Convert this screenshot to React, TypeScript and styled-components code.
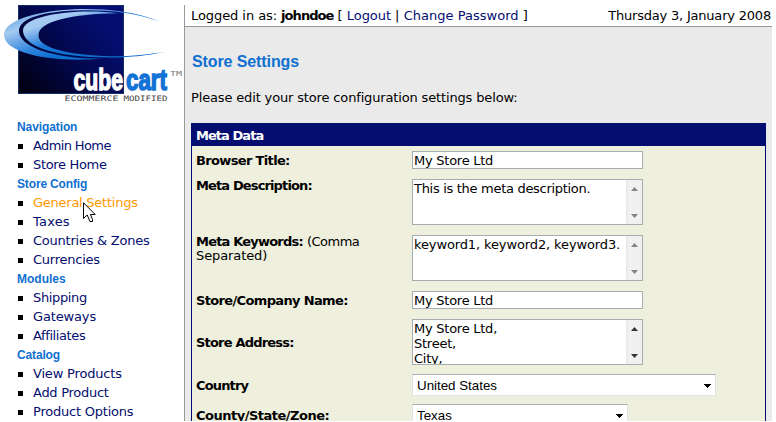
import React from "react";
import styled, { createGlobalStyle, css } from "styled-components";

const GlobalStyle = createGlobalStyle`
  * { box-sizing: border-box; }
  html, body { margin: 0; background: #fff; }
  body {
    height: 422px;
    overflow: hidden;
    font: 13px/15px Verdana, "DejaVu Sans", sans-serif;
    color: #000;
  }
`;

const navy = "#040e70";
const blue = "#0f70d0";

const Page = styled.div`
  display: flex;
  width: 772px;
  height: 421px;
  padding-top: 5px;
  overflow: hidden;
`;

const Sidebar = styled.aside`
  width: 184px;
  flex: none;
  white-space: nowrap;
`;

const Logo = styled.svg`
  display: block;
  margin-bottom: 8px;
`;

const NavHeading = styled.h2<{ $spacing?: number }>`
  margin: 0 0 0 17px;
  height: 19px;
  font: bold 12px/19px "Liberation Sans", Arial, sans-serif;
  letter-spacing: ${(p) => p.$spacing ?? 0}px;
  color: ${blue};
`;

const NavList = styled.ul`
  margin: 0;
  padding: 0 0 0 18px;
  list-style: none;
`;

const NavItem = styled.li`
  display: flex;
  align-items: center;
  gap: 10px;
  height: 19px;
  &::before {
    content: "";
    width: 5px;
    height: 5px;
    background: #000;
  }
`;

const NavLink = styled.a<{ $active?: boolean; $spacing?: number }>`
  position: relative;
  height: 19px;
  line-height: 17px;
  letter-spacing: ${(p) => p.$spacing ?? 0}px;
  color: ${(p) => (p.$active ? "#ff9900" : navy)};
`;

const Cursor = styled.svg`
  position: absolute;
  left: 50px;
  top: 8px;
`;

const Main = styled.main`
  flex: 1;
  min-width: 0;
  border-left: 1px solid #999;
  background: #eaeaea;
  white-space: nowrap;
`;

const TopBar = styled.header`
  display: flex;
  justify-content: space-between;
  height: 22px;
  padding: 0 1px 0 6px;
  border-bottom: 1px solid #999;
  background: #fff;
  line-height: 21px;
`;

const Run = styled.span<{ $spacing?: number; $bold?: boolean; $link?: boolean }>`
  letter-spacing: ${(p) => p.$spacing ?? 0}px;
  font-weight: ${(p) => (p.$bold ? "bold" : "normal")};
  ${(p) => p.$link && css`color: ${navy};`}
`;

const Content = styled.div`
  padding: 24px 6px 0;
`;

const Title = styled.h1`
  margin: 0 0 0 1px;
  height: 20px;
  font: bold 16px/22px "Liberation Sans", Arial, sans-serif;
  letter-spacing: -0.1px;
  color: ${blue};
`;

const Intro = styled.p`
  margin: 0;
  padding-top: 19px;
  height: 52px;
`;

const Panel = styled.section`
  height: 310px;
  border: 1px solid ${navy};
  border-top: 0;
  background: #eeefdd;
`;

const PanelHeader = styled.h3`
  margin: 0;
  height: 23px;
  padding: 1px 4px 0;
  background: ${navy};
  color: #fff;
  font-size: 13px;
  line-height: 23px;
`;

const Row = styled.div<{ $top?: boolean; $tight?: boolean }>`
  display: grid;
  grid-template-columns: 216px 1fr;
  align-items: ${(p) => (p.$top ? "start" : "center")};
  padding: ${(p) => (p.$tight ? "4px" : "5px")} 0 ${(p) => (p.$tight ? "4px" : "5px")} 4px;
`;

const Label = styled.label<{ $shift?: number }>`
  white-space: normal;
  line-height: 14px;
  margin-top: ${(p) => p.$shift ?? 0}px;
`;

const field = css`
  width: 231px;
  border: 1px solid #a5acb2;
  background: #fff;
  overflow: hidden;
`;

const TextField = styled.div`
  ${field}
  height: 18px;
  padding-left: 1px;
  line-height: 17px;
  letter-spacing: -0.25px;
`;

const TextArea = styled.div`
  ${field}
  display: flex;
  justify-content: space-between;
  height: 46px;
  padding-left: 1px;
  line-height: 15px;
`;

const AreaText = styled.div`
  padding-top: 1px;
  white-space: pre;
`;

const ScrollTrack = styled.div`
  display: flex;
  flex-direction: column;
  justify-content: space-between;
  align-items: center;
  width: 16px;
  flex: none;
  padding: 7px 0 6px;
  background: linear-gradient(90deg, #e8e8ea, #f1f1f1 20%, #f0f0f0);
`;

const SelectBox = styled.div<{ $width: number }>`
  display: flex;
  align-items: center;
  justify-content: space-between;
  width: ${(p) => p.$width}px;
  height: 22px;
  padding: 1px 4px 0;
  border: 1px solid #e2e3ea;
  border-top-color: #abadb3;
  background: #fff;
  font: 13.33px/20px "Liberation Sans", Arial, sans-serif;
`;

const DropArrow = () => (
  <svg width="7" height="4" viewBox="0 0 7 4" shapeRendering="crispEdges">
    <path d="M0 0h7v1H6v1H5v1H4v1H3V3H2V2H1V1H0z" fill="#000" />
  </svg>
);

const ScrollArrow = ({ down, color }: { down?: boolean; color: string }) => (
  <svg width="7" height="4" viewBox="0 0 7 4">
    <path d={down ? "M0 0H7L3.5 4z" : "M0 4H7L3.5 0z"} fill={color} />
  </svg>
);

const Area = ({ text, spacing, active }: { text: string; spacing?: number; active?: boolean }) => (
  <TextArea>
    <AreaText>
      <Run $spacing={spacing}>{text}</Run>
    </AreaText>
    <ScrollTrack>
      <ScrollArrow color={active ? "#333" : "#858585"} />
      <ScrollArrow down color={active ? "#333" : "#858585"} />
    </ScrollTrack>
  </TextArea>
);

const CubeCartLogo = () => (
  <Logo width="184" height="105" viewBox="0 5 184 105">
    <defs>
      <linearGradient id="cube" x1="0" y1="1" x2="0.9" y2="0.35">
        <stop offset="0" stopColor="#00000c" />
        <stop offset="0.55" stopColor="#02074a" />
        <stop offset="1" stopColor="#040e70" />
      </linearGradient>
      <linearGradient id="outerRing" gradientUnits="userSpaceOnUse" x1="30" y1="8" x2="48" y2="58">
        <stop offset="0" stopColor="#5b9fe2" />
        <stop offset="0.3" stopColor="#a5caf0" />
        <stop offset="0.75" stopColor="#2f84dc" />
        <stop offset="1" stopColor="#0f70d0" />
      </linearGradient>
      <linearGradient id="innerRing" gradientUnits="userSpaceOnUse" x1="38" y1="12" x2="52" y2="55">
        <stop offset="0" stopColor="#a9cdf3" />
        <stop offset="0.3" stopColor="#a3c9f1" />
        <stop offset="0.75" stopColor="#1c78d8" />
        <stop offset="1" stopColor="#0f70d0" />
      </linearGradient>
    </defs>
    <rect x="18.5" y="5.5" width="105" height="88" fill="url(#cube)" stroke="#122d69" />
    <path
      d="M159.500 21.500C134 11 105 8.500 75 9.200C34 11 4 21 4 35C4 51 42 63 102 58.800C50 58.500 19 46 19 31C19 17.500 45 11 82 10.200C108 9.800 135 12.500 159.500 21.500Z"
      fill="url(#outerRing)"
    />
    <path
      d="M118 13.300C80 8 23 14.500 23 30.500C23 45 50 57.500 112 57.500C132 57.500 149 55 165 52C149 54 130 56.500 112 56.300C68 55 38.500 48 38.500 35.500C38.500 21 72 14 118 13.300Z"
      fill="url(#innerRing)"
    />
    <g fontFamily='"Liberation Sans Narrow", "Liberation Sans", Arial, sans-serif' fontWeight="bold" fontSize="30" strokeWidth="1.5">
      <text x="73.500" y="90.300" textLength="49.500" lengthAdjust="spacingAndGlyphs" fill="#fff" stroke="#fff">cube</text>
      <text x="126" y="90.300" textLength="41" lengthAdjust="spacingAndGlyphs" fill="#1272d5" stroke="#1272d5">cart</text>
    </g>
    <g fontFamily='"DejaVu Sans Mono", monospace' fontSize="7.500" fill="#444">
      <text x="170" y="76" fill="#777" fontSize="7" textLength="12" lengthAdjust="spacingAndGlyphs">TM</text>
      <text x="64.500" y="101" textLength="54" lengthAdjust="spacingAndGlyphs">ECOMMERCE</text>
      <text x="123.500" y="101" textLength="44" lengthAdjust="spacingAndGlyphs">MODIFIED</text>
    </g>
  </Logo>
);

const MousePointer = () => (
  <Cursor width="13" height="21" viewBox="0 0 13 21">
    <path d="M.5 .8V16.500L4.200 13L7 19.500H9.500V17.500L7.500 12.500H12.200Z" fill="#fff" stroke="#000" />
  </Cursor>
);

type Item = { label: string; active?: boolean; spacing?: number };
const menu: { heading: string; spacing?: number; items: Item[] }[] = [
  {
    heading: "Navigation",
    spacing: -0.1,
    items: [
      { label: "Admin Home", spacing: -0.62 },
      { label: "Store Home", spacing: -0.33 },
    ],
  },
  {
    heading: "Store Config",
    spacing: -0.15,
    items: [
      { label: "General Settings", active: true, spacing: -0.25 },
      { label: "Taxes", spacing: 0.2 },
      { label: "Countries & Zones", spacing: -0.24 },
      { label: "Currencies", spacing: -0.25 },
    ],
  },
  {
    heading: "Modules",
    items: [
      { label: "Shipping", spacing: -0.35 },
      { label: "Gateways", spacing: -0.15 },
      { label: "Affiliates", spacing: -0.4 },
    ],
  },
  {
    heading: "Catalog",
    spacing: -0.15,
    items: [
      { label: "View Products", spacing: -0.18 },
      { label: "Add Product", spacing: -0.28 },
      { label: "Product Options", spacing: -0.22 },
    ],
  },
];

export default function App() {
  return (
    <>
      <GlobalStyle />
      <Page>
        <Sidebar>
          <CubeCartLogo />
          {menu.map((group) => (
            <nav key={group.heading}>
              <NavHeading $spacing={group.spacing}>{group.heading}</NavHeading>
              <NavList>
                {group.items.map((item) => (
                  <NavItem key={item.label}>
                    <NavLink $active={item.active} $spacing={item.spacing}>
                      {item.label}
                      {item.active && <MousePointer />}
                    </NavLink>
                  </NavItem>
                ))}
              </NavList>
            </nav>
          ))}
        </Sidebar>
        <Main>
          <TopBar>
            <div>
              <Run $spacing={-0.07}>Logged in as: </Run>
              <Run $bold $spacing={-0.95}>johndoe</Run>
              <Run> [ </Run>
              <Run $link $spacing={-0.05}>Logout</Run>
              <Run> | </Run>
              <Run $link $spacing={0.02}>Change Password</Run>
              <Run> ]</Run>
            </div>
            <Run $spacing={-0.2}>Thursday 3, January 2008</Run>
          </TopBar>
          <Content>
            <Title>Store Settings</Title>
            <Intro>
              <Run $spacing={-0.15}>Please edit your store configuration settings below:</Run>
            </Intro>
            <Panel>
              <PanelHeader>
                <Run $bold $spacing={-0.95}>Meta Data</Run>
              </PanelHeader>
              <Row>
                <Label $shift={2}><Run $bold $spacing={-0.65}>Browser Title:</Run></Label>
                <TextField>My Store Ltd</TextField>
              </Row>
              <Row $top>
                <Label><Run $bold $spacing={-0.87}>Meta Description:</Run></Label>
                <Area text="This is the meta description." spacing={-0.3} />
              </Row>
              <Row $top>
                <Label>
                  <Run $bold $spacing={-0.8}>Meta Keywords:</Run>{" "}
                  <Run $spacing={-0.5}>(Comma</Run>
                  <br />
                  <Run $spacing={-0.1}>Separated)</Run>
                </Label>
                <Area text="keyword1, keyword2, keyword3." spacing={-0.12} />
              </Row>
              <Row>
                <Label $shift={2}><Run $bold $spacing={-0.65}>Store/Company Name:</Run></Label>
                <TextField>My Store Ltd</TextField>
              </Row>
              <Row>
                <Label $shift={2}><Run $bold $spacing={-0.8}>Store Address:</Run></Label>
                <Area text={"My Store Ltd,\nStreet,\nCity,"} spacing={-0.25} active />
              </Row>
              <Row $tight>
                <Label $shift={2}><Run $bold $spacing={-0.85}>Country</Run></Label>
                <SelectBox $width={304}>United States<DropArrow /></SelectBox>
              </Row>
              <Row $tight>
                <Label $shift={2}><Run $bold $spacing={-0.5}>County/State/Zone:</Run></Label>
                <SelectBox $width={216}>Texas<DropArrow /></SelectBox>
              </Row>
            </Panel>
          </Content>
        </Main>
      </Page>
    </>
  );
}
